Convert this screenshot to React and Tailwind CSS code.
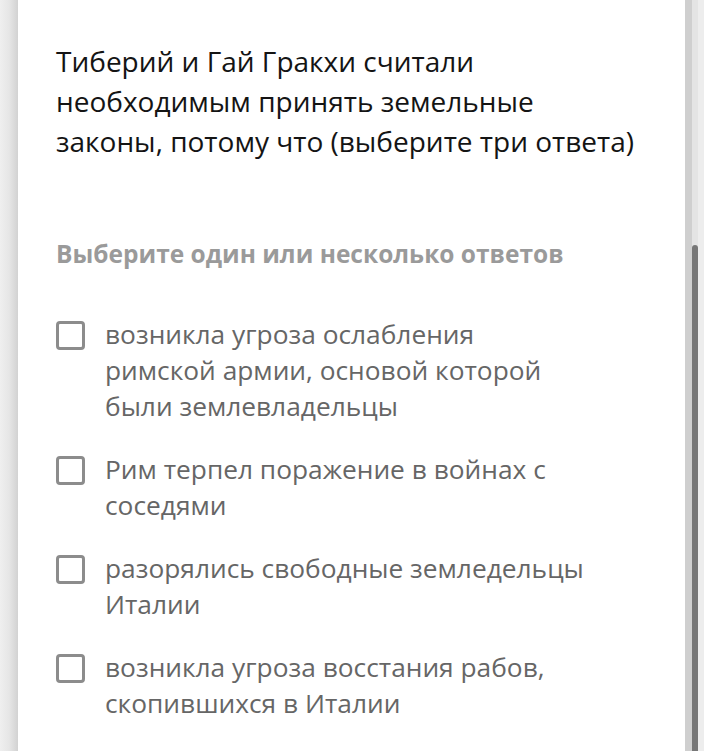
import React from "react";

const options = [
  ["возникла угроза ослабления", "римской армии, основой которой", "были землевладельцы"],
  ["Рим терпел поражение в войнах с", "соседями"],
  ["разорялись свободные земледельцы", "Италии"],
  ["возникла угроза восстания рабов,", "скопившихся в Италии"]
];

function Option({ lines }) {
  return (
    <label className="flex items-start">
      <span className="mt-[5px] w-[29px] h-[29px] shrink-0 rounded-[4px] border-[3px] border-[#8c8c8c] bg-white" />
      <span className="ml-[20px] text-[26.3px] leading-[36px] text-[#666666]">
        {lines.map((line, i) => (
          <span key={i} className="block whitespace-nowrap">
            {line}
          </span>
        ))}
      </span>
    </label>
  );
}

export default function App() {
  return (
    <div
      className="flex h-[751px] w-full overflow-hidden bg-white"
      style={{ fontFamily: '"Open Sans", "Noto Sans", sans-serif' }}
    >
      <div className="w-[18px] shrink-0 bg-gradient-to-r from-[#efefef] via-[#e6e6e6] to-[#d2d2d2]" />

      <div className="flex-1 bg-white pl-[38px] pt-[41px]">
        <h1 className="text-[28px] leading-[40px] font-normal text-[#141414]">
          <span className="block whitespace-nowrap">Тиберий и Гай Гракхи считали</span>
          <span className="block whitespace-nowrap">необходимым принять земельные</span>
          <span className="block whitespace-nowrap">законы, потому что (выберите три ответа)</span>
        </h1>

        <p className="mt-[78px] text-[24.5px] leading-[30px] font-bold text-[#9a9a9a]">
          Выберите один или несколько ответов
        </p>

        <div className="mt-[47px] flex flex-col gap-[27px]">
          {options.map((lines, i) => (
            <Option key={i} lines={lines} />
          ))}
        </div>
      </div>

      <div className="flex w-[19px] shrink-0">
        <div className="w-[7px] bg-[#cfcfcf]" />
        <div className="flex w-[6px] flex-col bg-[#e4e4e4]">
          <div className="mt-[245px] flex-1 rounded-t-[3px] bg-[#777777]" />
        </div>
        <div className="w-[6px] bg-[#ededed]" />
      </div>
    </div>
  );
}
